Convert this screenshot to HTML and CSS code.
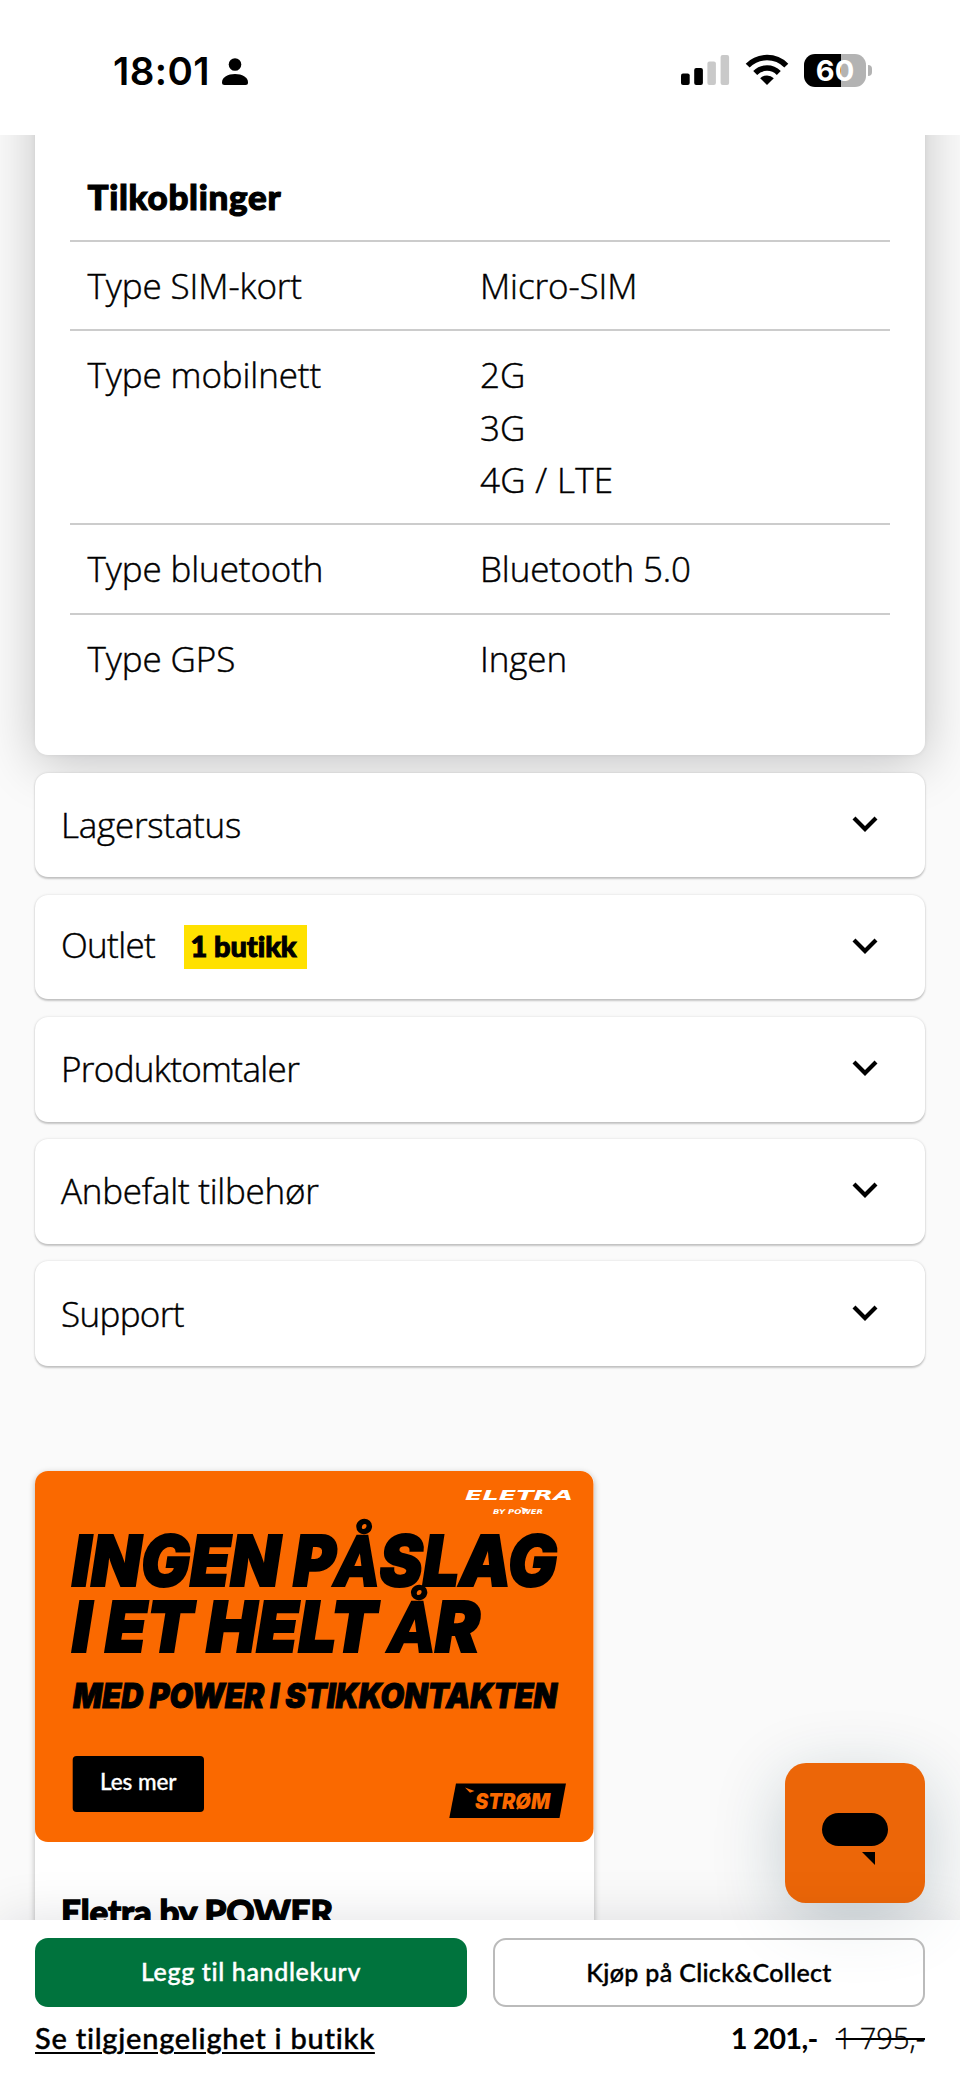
FILE: index.html
```
<!DOCTYPE html>
<html lang="no">
<head>
<meta charset="utf-8">
<title>POWER</title>
<link rel="stylesheet" href="styles.css">
</head>
<body>
<div class="phone">
  <header class="status">
    <div class="status-left">
      <span class="clock">18:01</span>
      <svg class="person" width="28" height="30" viewBox="0 0 28 30"><circle cx="14" cy="8.500" r="6.300"/><path d="M1 26.500C1 21 7 18 14 18s13 3 13 8.500Q27 29 24.500 29h-21Q1 29 1 26.500z"/></svg>
    </div>
    <div class="status-right">
      <svg width="49" height="32" viewBox="0 0 49 32"><rect x="0" y="19.500" width="8.700" height="11.500" rx="2"/><rect x="13.200" y="14" width="8.700" height="17" rx="2"/><g fill="#c9c9c9"><rect x="26.400" y="7.500" width="8.500" height="23.500" rx="2"/><rect x="39.600" y="1" width="8.500" height="30" rx="2"/></g></svg>
      <svg class="wifi" width="44" height="32" viewBox="0 0 44 32"><g fill="none" stroke="#000" stroke-width="5.600"><path d="M2.700 11.600a27.200 27.200 0 0 1 38.600 0"/><path d="M10.200 18.900a16.800 16.800 0 0 1 23.600 0"/></g><path d="M22 31l-6.800-6.800a9.600 9.600 0 0 1 13.600 0z"/></svg>
      <div class="battery"><span class="battery-level">60</span><i class="battery-nub"></i></div>
    </div>
  </header>

  <main class="content">
    <section class="spec-card">
      <h2 class="spec-title">Tilkoblinger</h2>
      <dl class="spec-list">
        <div class="spec-row"><dt>Type SIM-kort</dt><dd>Micro-SIM</dd></div>
        <div class="spec-row"><dt>Type mobilnett</dt><dd>2G<br>3G<br><span class="wide">4G / LTE</span></dd></div>
        <div class="spec-row"><dt>Type bluetooth</dt><dd>Bluetooth 5.0</dd></div>
        <div class="spec-row"><dt>Type GPS</dt><dd>Ingen</dd></div>
      </dl>
    </section>

    <section class="panels">
      <div class="panel"><span>Lagerstatus</span><svg class="chevron" viewBox="0 0 26 16"><path d="M2 2l11 11L24 2"/></svg></div>
      <div class="panel panel-outlet"><span class="tight">Outlet</span><span class="badge">1 butikk</span><svg class="chevron" viewBox="0 0 26 16"><path d="M2 2l11 11L24 2"/></svg></div>
      <div class="panel"><span class="tight">Produktomtaler</span><svg class="chevron" viewBox="0 0 26 16"><path d="M2 2l11 11L24 2"/></svg></div>
      <div class="panel"><span>Anbefalt tilbehør</span><svg class="chevron" viewBox="0 0 26 16"><path d="M2 2l11 11L24 2"/></svg></div>
      <div class="panel"><span class="tight">Support</span><svg class="chevron" viewBox="0 0 26 16"><path d="M2 2l11 11L24 2"/></svg></div>
    </section>

    <article class="promo">
      <svg class="promo-banner" width="558.500" height="371" viewBox="0 0 558.500 371">
        <rect width="558.500" height="371" rx="13" fill="#fa6900"/>
        <g class="headline">
          <text x="37" y="115.300" font-size="70" textLength="485" lengthAdjust="spacingAndGlyphs">INGEN P<tspan class="ring">Å</tspan>SLAG</text>
          <text x="37" y="180.600" font-size="70" textLength="408" lengthAdjust="spacingAndGlyphs">I ET HELT <tspan class="ring">Å</tspan>R</text>
          <text class="sub" x="38" y="237.300" font-size="33.500" textLength="484" lengthAdjust="spacingAndGlyphs">MED POWER I STIKKONTAKTEN</text>
        </g>
        <g class="brand">
          <text x="430" y="28.800" font-size="14.500" textLength="108" lengthAdjust="spacingAndGlyphs">ELETRA</text>
          <text x="458" y="43.200" font-size="6.500" textLength="50" lengthAdjust="spacingAndGlyphs">BY POWER</text>
          <path d="M485 36l9 2.500-4 2z"/>
        </g>
        <rect x="37.700" y="285" width="131.300" height="56" rx="4"/>
        <text class="cta" x="65" y="319.300" textLength="76.500">Les mer</text>
        <path d="M421 312.500h110l-6.500 34.500H414.300z"/>
        <path d="M430 316.500l9.500 3.500-4.500 1.700z" fill="#fa6900"/>
        <text class="strom" x="440" y="338" font-size="22" textLength="75" lengthAdjust="spacingAndGlyphs">STRØM</text>
      </svg>
      <h3 class="promo-title">Eletra by POWER</h3>
    </article>
  </main>

  <button class="chat" aria-label="Chat"><svg width="66" height="54" viewBox="0 0 66 54"><rect width="66" height="33" rx="16.500"/><path d="M40 39h13v13z"/></svg></button>

  <footer class="buybar">
    <div class="buttons">
      <button class="btn btn-primary">Legg til handlekurv</button>
      <button class="btn btn-outline">Kjøp på Click&amp;Collect</button>
    </div>
    <div class="summary">
      <a class="stock">Se tilgjengelighet i butikk</a>
      <span class="price">1 201,-</span>
      <s class="old-price">1 795,-</s>
    </div>
  </footer>
</div>
</body>
</html>
```
FILE: styles.css
```
* { box-sizing: border-box; }
body { margin: 0; background: #fff; color: #000; font-family: "Open Sans", sans-serif; }
button { font: inherit; border: 0; padding: 0; }
svg { display: block; flex: none; }

.phone { position: relative; width: 960px; height: 2086px; overflow: hidden; background: #fff; display: flex; flex-direction: column; }

.status { position: relative; z-index: 1; height: 135px; flex: none; background: #fff; display: flex; justify-content: space-between; align-items: flex-start; padding: 54px 94px 0 113px; }
.status-left { display: flex; align-items: flex-start; gap: 11px; }
.clock { font: 600 38.5px/34px Inter, sans-serif; letter-spacing: .4px; }
.person { margin-top: 2px; }
.status-right { display: flex; gap: 15px; }
.battery { position: relative; width: 62px; height: 33px; border-radius: 11px; background: linear-gradient(90deg, #000 37px, #b3b3b3 37px); color: #fff; text-align: center; }
.battery-level { font: 700 29px/33px Inter, sans-serif; }
.battery-nub { position: absolute; left: 63.500px; top: 11px; width: 4px; height: 11px; border-radius: 0 4px 4px 0; background: #b3b3b3; }

.content { height: 1785px; flex: none; overflow: hidden; background: #fafafa; padding: 0 35px; }

.spec-card { height: 700px; margin-top: -80px; padding: 114.500px 35px 0; background: #fff; border-radius: 13px; box-shadow: 0 9px 52px rgba(0, 0, 10, .22), 0 0 4px rgba(0, 0, 0, .08); }
.spec-title { margin: 0; padding: 0 17.500px; height: 70.200px; font: 900 35px/52px Lato, sans-serif; letter-spacing: .7px; -webkit-text-stroke: 1.1px #000; }
.spec-list { margin: 0; font-weight: 300; font-size: 35px; line-height: 52.300px; letter-spacing: -.1px; -webkit-text-stroke: .45px #000; }
.spec-row { display: grid; grid-template-columns: 392.500px 1fr; padding: 18.200px 0 17px 17.500px; border-top: 2px solid #ccc; }
.spec-row dd { margin: 0; }
.wide { letter-spacing: .3px; }

.panels { display: grid; gap: 17.500px; margin-top: 17.500px; }
.panel { position: relative; height: 104.700px; display: flex; align-items: center; padding: 0 47px 0 26px; background: #fff; border-radius: 13px; box-shadow: 0 1.500px 2px rgba(0, 0, 0, .2), 0 0 3px rgba(0, 0, 0, .1); font-weight: 300; font-size: 35px; line-height: 52px; letter-spacing: -.25px; -webkit-text-stroke: .45px #000; }
.panel-outlet > span { margin-bottom: 4px; }
.tight { letter-spacing: -.65px; }
.panel .badge { margin: 0 0 0 28.500px; padding-right: 3px; width: 123px; height: 43.500px; background: #ffe100; text-align: center; font: 900 29px/42px Lato, sans-serif; letter-spacing: -.1px; -webkit-text-stroke: 1px #000; }
.chevron { width: 26px; height: 16px; margin: 0 0 2px auto; fill: none; stroke: #000; stroke-width: 4.200; }

.promo { width: 558.500px; height: 600px; margin-top: 105px; background: #fff; border-radius: 13px; box-shadow: 0 2px 6px rgba(0, 0, 0, .28); }
.headline text, .strom { font-family: Inter, sans-serif; font-weight: 900; font-style: italic; }
.headline text { stroke: #000; stroke-width: 2; }
.headline .sub { stroke-width: 1; }
.ring { font-family: Roboto, sans-serif; font-weight: 900; font-size: 71px; }
.strom { fill: #fa6900; }
.brand { fill: #fff; font-family: "DejaVu Sans", sans-serif; font-weight: 700; font-style: oblique; }
.cta { fill: #fff; font: 500 22.500px Lato, sans-serif; stroke: #fff; stroke-width: .3; }
.promo-title { margin: 43px 0 0 26px; font: 900 35px/52px Lato, sans-serif; letter-spacing: -.2px; -webkit-text-stroke: 1.3px #000; }

.chat { position: absolute; left: 785px; top: 1763px; width: 140px; height: 140px; border-radius: 21px; background: #ec6608; display: flex; justify-content: center; padding-top: 50px; box-shadow: 0 18px 70px rgba(20, 60, 75, .24); }

.buybar { position: relative; height: 166px; flex: none; background: rgba(255, 255, 255, .6); padding: 17.500px 35px 0; box-shadow: 0 0 50px rgba(0, 0, 30, .12); }
.buttons { display: grid; grid-template-columns: 1fr 1fr; gap: 26px; }
.btn { height: 69.500px; padding-bottom: 3px; border-radius: 13px; font: 500 25px/64px Lato, sans-serif; letter-spacing: .65px; -webkit-text-stroke: .4px; }
.btn-primary { background: #00733d; color: #fff; }
.btn-outline { background: transparent; color: #000; border: 2px solid #bbb; letter-spacing: .33px; }
.summary { display: flex; margin-top: 8.500px; font-size: 29px; line-height: 44px; }
.stock { font-family: Lato, sans-serif; font-weight: 500; letter-spacing: .75px; -webkit-text-stroke: .4px #000; text-decoration: underline; text-decoration-thickness: 2px; text-underline-offset: 3px; }
.price { margin-left: auto; font-family: Lato, sans-serif; font-weight: 700; letter-spacing: -.7px; }
.old-price { margin-left: 18px; font-weight: 300; -webkit-text-stroke: .35px #000; text-decoration-thickness: 2px; }
```
